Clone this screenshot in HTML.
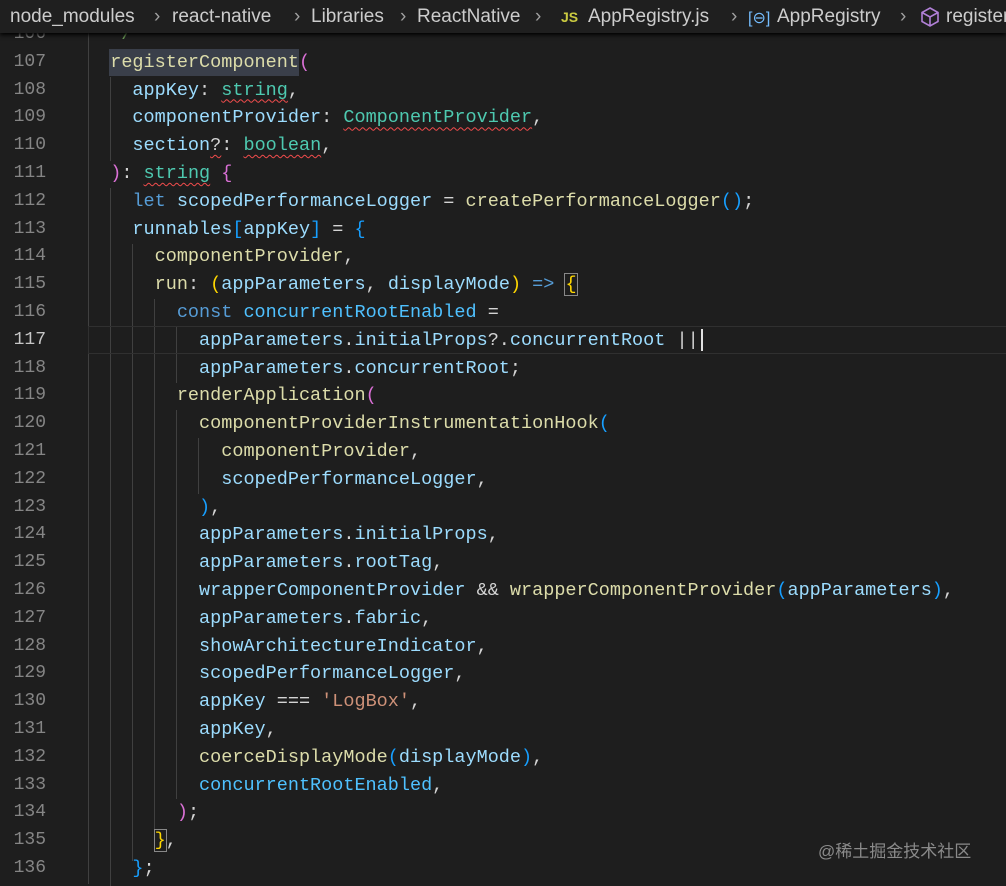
<!DOCTYPE html>
<html><head><meta charset="utf-8"><style>
body{margin:0;width:1006px;height:884px;background:#1e1e1e;overflow:hidden;position:relative;font-family:"Liberation Mono",monospace}
.code{position:absolute;left:88px;top:21px;font-size:18.5px;line-height:27.8px;white-space:pre;color:#d4d4d4;letter-spacing:0px}
.ln{position:absolute;left:0;width:46px;top:21px;text-align:right;font-size:18px;line-height:27.8px;color:#858585;white-space:pre}
.f{color:#dcdcaa}.v{color:#9cdcfe}.t{color:#4ec9b0}.k{color:#569cd6}.c{color:#4fc1ff}.s{color:#ce9178}.p{color:#da70d6}.b{color:#179fff}.y{color:#ffd700}.cm{color:#6a9955}
.sq{text-decoration:underline wavy #f14c4c;text-decoration-thickness:1px;text-underline-offset:4px}
.g{position:absolute;width:1px;background:#404040}
.bar{position:absolute;left:0;top:0;width:1006px;height:33px;background:#1f1f1f;box-shadow:0 2px 4px #000;font-family:"Liberation Sans",sans-serif;font-size:19px;color:#cccccc;z-index:5;overflow:hidden}
.bar span{position:absolute;top:6px;white-space:nowrap}
.sep{color:#a0a0a0}
</style></head><body>
<div class="g" style="left:88px;top:0;height:884px"></div>
<div class="g" style="left:110px;top:77px;height:84px"></div>
<div class="g" style="left:110px;top:188px;height:698px"></div>
<div class="g" style="left:132px;top:244px;height:617px"></div>
<div class="g" style="left:154px;top:299px;height:534px"></div>
<div class="g" style="left:176px;top:327px;height:56px"></div>
<div class="g" style="left:176px;top:410px;height:389px"></div>
<div class="g" style="left:198px;top:438px;height:56px"></div>
<div style="position:absolute;left:88px;top:326px;width:920px;height:26px;border:1px solid #303030"></div>
<div style="position:absolute;left:109px;top:49px;width:190px;height:27px;background:#3a3f4a"></div>
<div style="position:absolute;left:701px;top:329px;width:2px;height:22px;background:#e0e0e0"></div>
<div class="ln">106
107
108
109
110
111
112
113
114
115
116
<span style="color:#c6c6c6">117</span>
118
119
120
121
122
123
124
125
126
127
128
129
130
131
132
133
134
135
136</div>
<div class="code"><span class="cm">  */</span>
  <span class="f">registerComponent</span><span class="p">(</span>
    <span class="v">appKey</span>: <span class="t sq">string</span>,
    <span class="v">componentProvider</span>: <span class="t sq">ComponentProvider</span>,
    <span class="v">section</span><span class="sq">?</span>: <span class="t sq">boolean</span>,
  <span class="p">)</span>: <span class="t sq">string</span> <span class="p">{</span>
    <span class="k">let</span> <span class="v">scopedPerformanceLogger</span> = <span class="f">createPerformanceLogger</span><span class="b">()</span>;
    <span class="v">runnables</span><span class="b">[</span><span class="v">appKey</span><span class="b">]</span> = <span class="b">{</span>
      <span class="f">componentProvider</span>,
      <span class="f">run</span>: <span class="y">(</span><span class="v">appParameters</span>, <span class="v">displayMode</span><span class="y">)</span> <span class="k">=&gt;</span> <span class="y" style="outline:1px solid #888">{</span>
        <span class="k">const</span> <span class="c">concurrentRootEnabled</span> =
          <span class="v">appParameters</span>.<span class="v">initialProps</span>?.<span class="v">concurrentRoot</span> ||
          <span class="v">appParameters</span>.<span class="v">concurrentRoot</span>;
        <span class="f">renderApplication</span><span class="p">(</span>
          <span class="f">componentProviderInstrumentationHook</span><span class="b">(</span>
            <span class="f">componentProvider</span>,
            <span class="v">scopedPerformanceLogger</span>,
          <span class="b">)</span>,
          <span class="v">appParameters</span>.<span class="v">initialProps</span>,
          <span class="v">appParameters</span>.<span class="v">rootTag</span>,
          <span class="v">wrapperComponentProvider</span> &amp;&amp; <span class="f">wrapperComponentProvider</span><span class="b">(</span><span class="v">appParameters</span><span class="b">)</span>,
          <span class="v">appParameters</span>.<span class="v">fabric</span>,
          <span class="v">showArchitectureIndicator</span>,
          <span class="v">scopedPerformanceLogger</span>,
          <span class="v">appKey</span> === <span class="s">'LogBox'</span>,
          <span class="v">appKey</span>,
          <span class="f">coerceDisplayMode</span><span class="b">(</span><span class="v">displayMode</span><span class="b">)</span>,
          <span class="c">concurrentRootEnabled</span>,
        <span class="p">)</span>;
      <span class="y" style="outline:1px solid #888">}</span>,
    <span class="b">}</span>;</div>
<div style="position:absolute;left:818px;top:837px;font-family:'Liberation Sans','Noto Sans CJK SC',sans-serif;font-size:17px;color:#8a8a8a">@稀土掘金技术社区</div>
<div class="bar">
<span style="left:10px">node_modules</span><span class="sep" style="left:154px">›</span>
<span style="left:172px">react-native</span><span class="sep" style="left:294px">›</span>
<span style="left:311px">Libraries</span><span class="sep" style="left:400px">›</span>
<span style="left:417px">ReactNative</span><span class="sep" style="left:535px">›</span>
<span style="left:561px;top:9px;font-size:14px;font-weight:bold;color:#cbcb41">JS</span>
<span style="left:588px">AppRegistry.js</span><span class="sep" style="left:731px">›</span>
<span style="left:748px;color:#75beff;font-size:16px;top:8px">[⊖]</span>
<span style="left:777px">AppRegistry</span><span class="sep" style="left:900px">›</span>
<svg style="position:absolute;left:919px;top:6px" width="22" height="22" viewBox="0 0 22 22" fill="none" stroke="#b180d7" stroke-width="1.6"><path d="M11 2 L19 6.5 V15.5 L11 20 L3 15.5 V6.5 Z M3 6.5 L11 11 L19 6.5 M11 11 V20"/></svg>
<span style="left:946px">registerComponent</span>
</div>
</body></html>
